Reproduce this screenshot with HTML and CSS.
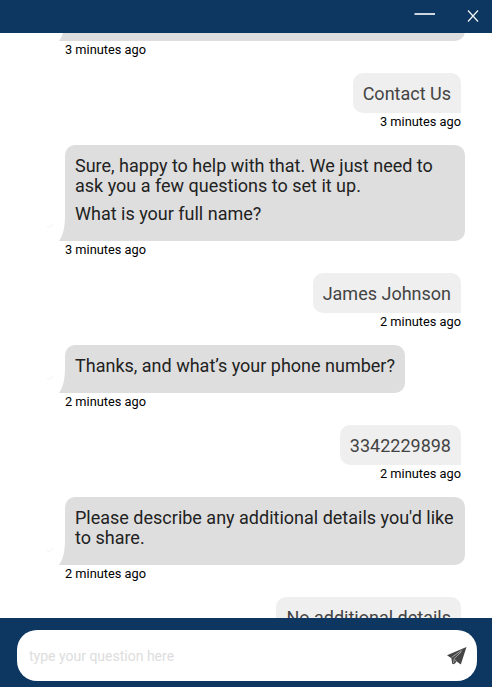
FILE: index.html
```html
<!DOCTYPE html>
<html lang="en">
<head>
<meta charset="utf-8">
<title>Chat</title>
<link rel="stylesheet" href="styles.css">
</head>
<body>
<div class="chat">
  <header class="bar">
    <svg class="minimize" width="22" height="4" viewBox="0 0 22 4"><path d="M.5 2h20.5" stroke="#fff" stroke-width="1.6"/></svg>
    <svg class="close" width="12" height="12" viewBox="0 0 12 12"><path d="M1 .5l10 11M11 .5L1 11.5" fill="none" stroke="#f4f7fa" stroke-width="1.2"/></svg>
  </header>
  <main class="messages">
    <div class="message bot clipped">
      <div class="bubble"><svg class="tail" width="6" height="26" viewBox="0 0 6 26"><path d="M6 0C6 11 4.5 20 0 26h6z"/></svg></div>
      <time>3 minutes ago</time>
    </div>
    <div class="message user">
      <div class="bubble">Contact Us</div>
      <time>3 minutes ago</time>
    </div>
    <div class="message bot">
      <div class="bubble">
        <p>Sure, happy to help with that. We just need to ask you a few questions to set it up.</p>
        <p>What is your full name?</p>
        <svg class="tail" width="6" height="26" viewBox="0 0 6 26"><path d="M6 0C6 11 4.5 20 0 26h6z"/></svg>
        <svg class="mark" width="7" height="7" viewBox="0 0 7 7"><path d="M0 3l2 2 4-4"/></svg>
      </div>
      <time>3 minutes ago</time>
    </div>
    <div class="message user">
      <div class="bubble">James Johnson</div>
      <time>2 minutes ago</time>
    </div>
    <div class="message bot">
      <div class="bubble">
        <p>Thanks, and what’s your phone number?</p>
        <svg class="tail" width="6" height="26" viewBox="0 0 6 26"><path d="M6 0C6 11 4.5 20 0 26h6z"/></svg>
        <svg class="mark" width="7" height="7" viewBox="0 0 7 7"><path d="M0 3l2 2 4-4"/></svg>
      </div>
      <time>2 minutes ago</time>
    </div>
    <div class="message user">
      <div class="bubble">3342229898</div>
      <time>2 minutes ago</time>
    </div>
    <div class="message bot">
      <div class="bubble">
        <p>Please describe any additional details you'd like to share.</p>
        <svg class="tail" width="6" height="26" viewBox="0 0 6 26"><path d="M6 0C6 11 4.5 20 0 26h6z"/></svg>
        <svg class="mark" width="7" height="7" viewBox="0 0 7 7"><path d="M0 3l2 2 4-4"/></svg>
      </div>
      <time>2 minutes ago</time>
    </div>
    <div class="message user">
      <div class="bubble">No additional details</div>
    </div>
  </main>
  <footer class="composer">
    <div class="field">
      <input type="text" placeholder="type your question here" aria-label="Message">
      <svg class="send" width="20" height="18" viewBox="0 0 20 18"><path d="M0 8.2L19.5 0 13.8 17.5 9.8 14.5 7 17.2 5.2 16.8 4.4 11.3z" fill="#454545"/><path d="M4.6 10.4L14.6 3.4M6.6 16L7.2 11.6 14.5 4.6M7.8 12.8l2 1.8" fill="none" stroke="#c4c4c4" stroke-width=".75"/></svg>
    </div>
  </footer>
</div>
</body>
</html>
```
FILE: styles.css
```css
* { box-sizing: border-box; }

body {
  margin: 0;
  font-family: Roboto, "Liberation Sans", sans-serif;
  background: #fff;
}

.chat {
  display: flex;
  flex-direction: column;
  height: 687px;
  overflow: hidden;
}

.bar {
  display: flex;
  flex: 0 0 33px;
  justify-content: flex-end;
  align-items: flex-start;
  gap: 32px;
  padding: 12px 13px 0 0;
  background: #0d3660;
}

.minimize { margin-right: -1px; }

.close { margin-top: -2px; }

.messages {
  display: flex;
  flex: 1;
  flex-direction: column;
  gap: 16px;
  min-height: 0;
  padding: 0 27px 0 65px;
  overflow: hidden;
}

.message {
  display: flex;
  flex: none;
  flex-direction: column;
  align-items: flex-start;
}

.message.user {
  align-items: flex-end;
  padding-right: 4px;
}

.bubble {
  position: relative;
  max-width: 400px;
  padding: 11px 10px 9px;
  border-radius: 10px;
  font-size: 18px;
  line-height: 20px;
}

.bot .bubble {
  border-bottom-left-radius: 0;
  background: #dedede;
  color: #222;
}

.user .bubble {
  border-bottom-right-radius: 0;
  background: #efefef;
  color: #444;
}

.bubble p { margin: 0 0 8px; }

.clipped { margin-top: -40px; }

.clipped .bubble {
  width: 400px;
  height: 48px;
}

.tail {
  position: absolute;
  left: -6px;
  bottom: 0;
  fill: #dedede;
}

.mark {
  position: absolute;
  left: -18px;
  bottom: 11px;
  fill: none;
  stroke: #edf2f5;
}

time {
  height: 16px;
  font-size: 12.8px;
  line-height: 17px;
  color: #000;
}

.composer {
  flex: 0 0 69px;
  padding: 12px 15px 6px 17px;
  background: #0d3660;
}

.field {
  display: flex;
  align-items: center;
  height: 51px;
  padding: 0 10px 0 12px;
  border-radius: 20px;
  background: #fff;
}

.field input {
  flex: 1;
  min-width: 0;
  padding: 0;
  border: 0;
  outline: 0;
  background: none;
  font: 14px Roboto, sans-serif;
}

.field input::placeholder {
  color: #ddd;
  opacity: 1;
}
```
